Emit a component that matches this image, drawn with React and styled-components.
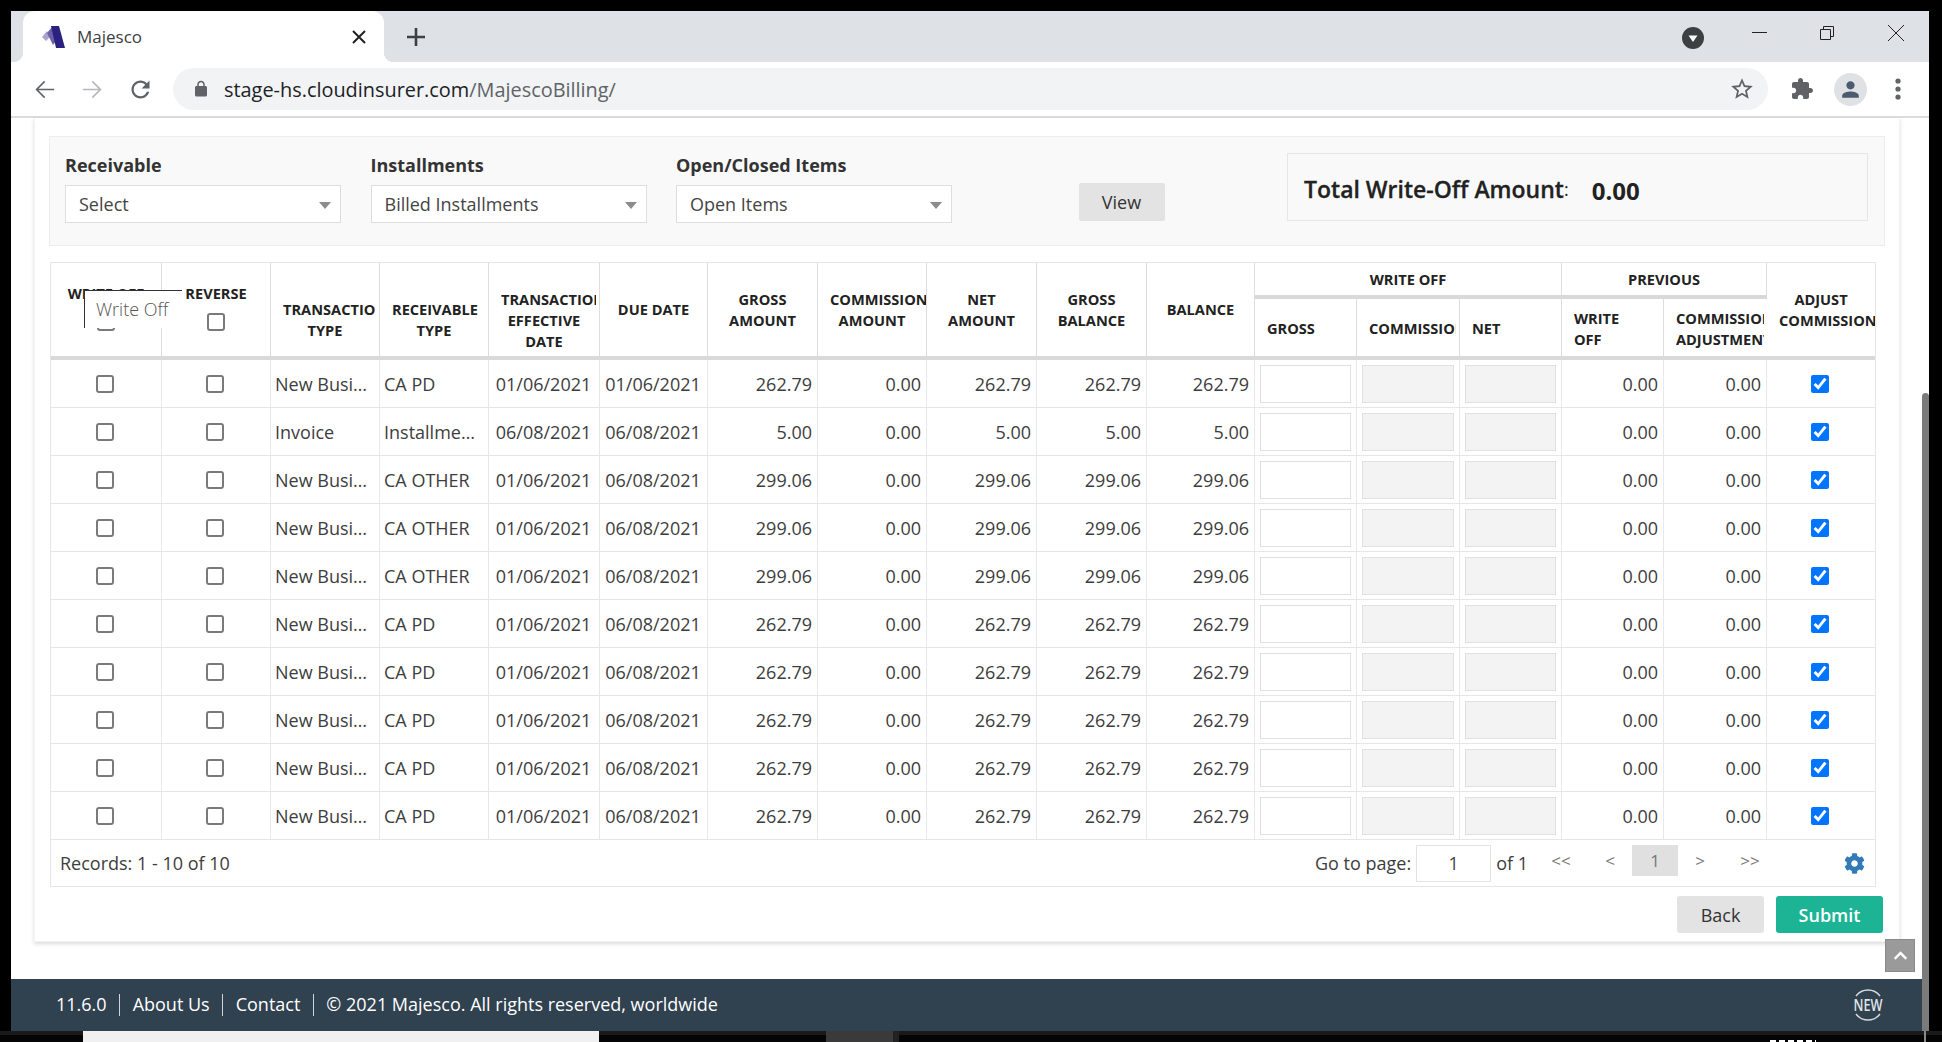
import React from "react";
import styled, { createGlobalStyle } from "styled-components";
import { FaCog, FaChevronUp } from "react-icons/fa";

const GlobalStyle = createGlobalStyle`
  html, body { margin: 0; padding: 0; background: #000; }
  body { font-family: "Open Sans", sans-serif; color: #333; overflow: hidden; }
  * { box-sizing: border-box; }
`;

const COLS = [111, 109, 109, 109, 111, 108, 110, 109, 110, 110, 108, 102, 103, 102, 102, 103, 108];

const ROWS = [
  ["New Business", "CA PD", "01/06/2021", "01/06/2021", "262.79"],
  ["Invoice", "Installment Fee", "06/08/2021", "06/08/2021", "5.00"],
  ["New Business", "CA OTHER", "01/06/2021", "06/08/2021", "299.06"],
  ["New Business", "CA OTHER", "01/06/2021", "06/08/2021", "299.06"],
  ["New Business", "CA OTHER", "01/06/2021", "06/08/2021", "299.06"],
  ["New Business", "CA PD", "01/06/2021", "06/08/2021", "262.79"],
  ["New Business", "CA PD", "01/06/2021", "06/08/2021", "262.79"],
  ["New Business", "CA PD", "01/06/2021", "06/08/2021", "262.79"],
  ["New Business", "CA PD", "01/06/2021", "06/08/2021", "262.79"],
  ["New Business", "CA PD", "01/06/2021", "06/08/2021", "262.79"],
];

const Screen = styled.div`
  width: 1942px;
  height: 1042px;
  padding: 11px 13px 0 11px;
  background: #000;
  display: flex;
  flex-direction: column;
`;

const Browser = styled.div`
  height: 1020px;
  display: flex;
  flex-direction: column;
  background: #fff;
`;

const TabStrip = styled.div`
  height: 51px;
  flex: none;
  display: flex;
  align-items: flex-start;
  padding-left: 12px;
  background: #dee1e6;
`;

const Tab = styled.div`
  position: relative;
  width: 361px;
  height: 51px;
  display: flex;
  align-items: center;
  padding: 0 17px 0 19px;
  background: #fff;
  border-radius: 12px 12px 0 0;
  font-size: 17px;
  color: #3c4043;

  &::before, &::after {
    content: "";
    position: absolute;
    bottom: 0;
    width: 10px;
    height: 10px;
  }
  &::before { left: -10px; background: radial-gradient(circle at 0 0, #dee1e6 10px, #fff 10.5px); }
  &::after { right: -10px; background: radial-gradient(circle at 100% 0, #dee1e6 10px, #fff 10.5px); }
`;

const TabTitle = styled.span`
  margin-left: 11px;
  flex: 1;
`;

const NewTab = styled.div`
  margin: 16px 0 0 22px;
  width: 20px;
  height: 20px;
  display: flex;
`;

const WindowButtons = styled.div`
  margin-left: auto;
  display: flex;
  align-items: center;
  height: 44px;
  padding-right: 24px;
`;

const ProfileDot = styled.div`
  width: 22px;
  height: 22px;
  margin: 10px 46px 0 0;
  border-radius: 50%;
  background: #3c4043;
  display: flex;
  align-items: center;
  justify-content: center;
`;

const WinIcon = styled.div`
  width: 18px;
  height: 18px;
  margin-left: ${(p) => p.$gap}px;
  display: flex;
`;

const Toolbar = styled.div`
  height: 56px;
  flex: none;
  display: flex;
  align-items: center;
  padding: 0 19px 0 19px;
  border-bottom: 2px solid #dadce0;
  background: #fff;
`;

const NavIcon = styled.div`
  width: 28px;
  height: 28px;
  margin-right: 20px;
  display: flex;
  align-items: center;
  justify-content: center;
  &:nth-of-type(3) { margin-right: 19px; }
`;

const Omnibox = styled.div`
  width: 1595px;
  height: 42px;
  flex: none;
  display: flex;
  align-items: center;
  padding: 0 13px 0 19px;
  border-radius: 21px;
  background: #f1f3f4;
  font-size: 19.9px;
  color: #202124;
`;

const LockIcon = styled.svg`
  flex: none;
  margin-right: 14px;
`;

const UrlPath = styled.span`
  color: #5f6368;
`;

const Star = styled.div`
  margin-left: auto;
  width: 26px;
  height: 26px;
  display: flex;
`;

const Extension = styled.div`
  width: 24px;
  height: 24px;
  margin-left: 22px;
  display: flex;
`;

const Avatar = styled.div`
  width: 33px;
  height: 33px;
  margin-left: 20px;
  border-radius: 50%;
  background: #dfe1e5;
  display: flex;
  align-items: center;
  justify-content: center;
`;

const MoreDots = styled.div`
  width: 24px;
  height: 24px;
  margin-left: 19px;
  display: flex;
`;

const Body = styled.div`
  flex: 1;
  min-height: 0;
  display: flex;
`;

const Main = styled.div`
  flex: 1;
  min-width: 0;
  display: flex;
  flex-direction: column;
`;

const ScrollTrack = styled.div`
  width: 7px;
  flex: none;
  padding-top: 275px;
  background: #fff;
`;

const ScrollThumb = styled.div`
  height: 100%;
  background: #7b7b7b;
  border-radius: 4px 4px 0 0;
`;

const Page = styled.div`
  position: relative;
  flex: 1;
  min-height: 0;
  padding: 0 22px 37px 23px;
`;

const Card = styled.div`
  height: 824px;
  padding: 18px 14px 0;
  background: #fff;
  border: 1px solid #f3f3f3;
  border-top: 0;
  box-shadow: 0 2px 4px rgba(0, 0, 0, 0.14);
`;

const FilterPanel = styled.div`
  height: 110px;
  display: flex;
  align-items: flex-start;
  padding: 0 16px 0 15px;
  background: #f9f9f9;
  border: 1px solid #ededed;
`;

const Field = styled.div`
  width: 276px;
  margin-right: 29.5px;
  padding-top: 17px;
`;

const FieldLabel = styled.div`
  height: 22px;
  margin-bottom: 9px;
  font-size: 18px;
  line-height: 22px;
  font-weight: 700;
  color: #333;
`;

const SelectBox = styled.div`
  height: 38px;
  display: flex;
  align-items: center;
  justify-content: space-between;
  padding: 0 9px 0 13px;
  background: #fff;
  border: 1px solid #dedede;
  font-size: 18px;
  color: #444;
`;

const Caret = styled.span`
  width: 0;
  height: 0;
  margin-top: 3px;
  border-left: 6px solid transparent;
  border-right: 6px solid transparent;
  border-top: 7px solid #8c8c8c;
`;

const ViewButton = styled.button`
  width: 86px;
  height: 38px;
  margin: 46px 0 0 97px;
  border: 0;
  border-radius: 2px;
  background: #e3e3e3;
  font: 18px "Open Sans", sans-serif;
  color: #333;
`;

const TotalBox = styled.div`
  width: 581px;
  height: 68px;
  margin: 16px 0 0 auto;
  display: flex;
  align-items: center;
  padding: 4px 0 0 16px;
  border: 1px solid #e6e6e6;
  font-size: 23px;
  font-weight: 600;
  color: #222;
  -webkit-text-stroke: 0.3px #222;
`;

const Colon = styled.span`
  font-size: 18px;
  font-weight: 400;
  -webkit-text-stroke: 0;
`;

const TotalValue = styled.span`
  margin: 3px 0 0 23px;
  font-size: 24px;
  font-weight: 700;
  -webkit-text-stroke: 0;
`;

const TableWrap = styled.div`
  position: relative;
  margin: 16px 0 0 1px;
  width: 1826px;
  border: 1px solid #e6e6e6;
`;

const Grid = styled.table`
  width: 1824px;
  table-layout: fixed;
  border-collapse: separate;
  border-spacing: 0;
`;

const Head = styled.th`
  padding: ${(p) => p.$top || 0}px 12px 0;
  overflow: hidden;
  font-size: 14.6px;
  line-height: 21px;
  font-weight: 700;
  color: #222;
  background: #fff;
  text-align: ${(p) => p.$align || "center"};
  vertical-align: ${(p) => p.$valign || "middle"};
  border-right: 1px solid #dcdcdc;
  border-bottom: 4px solid #d9d9d9;
  height: ${(p) => p.$h || 36}px;
  &:last-child { border-right: 0; }
`;

// long words stop a little before the cell edge
const Clipped = styled.span`
  display: block;
  clip-path: inset(0 -9px 0 0);
`;

const StackHead = styled(Head)`
  padding: 20px 0 0;
`;

const StackBox = styled.div`
  height: 50px;
  display: flex;
  flex-direction: column;
  align-items: center;
  gap: 9px;
`;

const Cell = styled.td`
  height: 48px;
  padding: 0 5px 0 4px;
  overflow: hidden;
  white-space: nowrap;
  text-overflow: ellipsis;
  font-size: 18px;
  color: #3d3d3d;
  text-align: ${(p) => p.$align || "left"};
  border-right: 1px solid #e8e8e8;
  border-bottom: 1px solid #e6e6e6;
  &:last-child { border-right: 0; }
`;

const CheckCell = styled(Cell)`
  padding: 0 8px 0 5px;
`;

const InputCell = styled(Cell)`
  padding: 0 5px;
`;

const Check = styled.input.attrs({ type: "checkbox" })`
  display: block;
  width: 18px;
  height: 18px;
  margin: 0 auto;
  &:not(:checked) {
    appearance: none;
    background: #fff;
    border: 2px solid #7a7a7a;
    border-radius: 3px;
  }
`;

const AmountInput = styled.input`
  display: block;
  width: 100%;
  height: 38px;
  border: 1px solid #e0e0e0;
  background: ${(p) => (p.disabled ? "#f3f3f3" : "#fff")};
`;

const Tip = styled.div`
  position: absolute;
  left: 33px;
  top: 27px;
  width: 98px;
  height: 38px;
  padding: 6px 0 0 11px;
  background: #fff;
  border-top: 1px solid #333;
  border-left: 1px solid #333;
  font-size: 18px;
  font-weight: 300;
  color: #555;
`;

const Pager = styled.div`
  height: 46px;
  display: flex;
  align-items: center;
  padding: 0 10px 0 9px;
  font-size: 18px;
  color: #3d3d3d;
`;

const GoTo = styled.span`
  margin-left: auto;
`;

const PageInput = styled.input`
  width: 75px;
  height: 37px;
  margin: 0 5px 0 5px;
  border: 1px solid #e3e3e3;
  font: 18px "Open Sans", sans-serif;
  color: #444;
  text-align: center;
`;

const PageLink = styled.div`
  width: ${(p) => (p.$active ? 46 : 44)}px;
  height: 31px;
  margin: -6px 0 0 ${(p) => p.$gap || 0}px;
  display: flex;
  align-items: center;
  justify-content: center;
  font-size: 17px;
  color: #777;
  background: ${(p) => (p.$active ? "#e0e0e0" : "transparent")};
`;

const Gear = styled(FaCog)`
  width: 21px;
  height: 21px;
  margin-left: 72px;
  color: #337ab7;
`;

const Actions = styled.div`
  display: flex;
  justify-content: flex-end;
  gap: 12px;
  margin: 9px 2px 0 0;
`;

const ActionButton = styled.button`
  height: 37px;
  width: ${(p) => (p.$primary ? 107 : 87)}px;
  border: 0;
  border-radius: 3px;
  background: ${(p) => (p.$primary ? "#1cb494" : "#e3e3e3")};
  color: ${(p) => (p.$primary ? "#fff" : "#333")};
  font: ${(p) => (p.$primary ? 600 : 400)} 18px "Open Sans", sans-serif;
`;

const ScrollUp = styled.div`
  position: absolute;
  right: 7px;
  bottom: 7px;
  width: 30px;
  height: 33px;
  display: flex;
  align-items: center;
  justify-content: center;
  background: #9a9a9a;
  border: 1px solid #8a8a8a;
  color: #fff;
`;

const Footer = styled.div`
  height: 52px;
  flex: none;
  display: flex;
  align-items: center;
  padding: 0 38px 0 45px;
  background: #304150;
  color: #fff;
  font-size: 18px;
`;

const FootItem = styled.span`
  height: 22px;
  line-height: 21px;
  padding: 0 12.5px;
  border-right: 1px solid #cfd5da;
  &:first-child { padding-left: 0; }
  &:last-of-type { border-right: 0; }
`;

const NewBadge = styled.svg`
  margin-left: auto;
  width: 32px;
  height: 36px;
`;

const BottomEdge = styled.div`
  flex: 1;
  display: flex;
  margin: 0 -13px 0 -11px;
  background: #050505;
  border-top: 4px solid #1a1a1a;
`;

const EdgeWindow = styled.div`
  width: 516px;
  margin: -4px 0 0 83px;
  background: #f0f0f0;
`;

const EdgeTab = styled.div`
  width: 73px;
  margin: -4px 0 0 227px;
  background: #3a3a3a;
  border-right: 6px solid #222;
`;

const EdgeLabel = styled.div`
  width: 46px;
  height: 2px;
  margin: 5px 0 0 871px;
  background: repeating-linear-gradient(90deg, #fff 0 6px, transparent 6px 9px);
`;

const EdgeLine = styled.div`
  width: 2px;
  margin: -4px 0 0 108px;
  background: #8a8a8a;
`;

const BackIcon = ({ color }) => (
  <svg viewBox="0 0 24 24" width="29" height="29" fill={color} style={{ flex: "none" }}><path d="M20 11.3H7l5.6-5.6L11.7 4.8 4.5 12l7.2 7.2.9-.9L7 12.7h13v-1.4z" /></svg>
);

const ForwardIcon = ({ color }) => (
  <svg viewBox="0 0 24 24" width="29" height="29" fill={color} style={{ flex: "none" }}><path d="M4 11.3h13l-5.6-5.6.9-.9 7.2 7.2-7.2 7.2-.9-.9 5.6-5.6H4v-1.4z" /></svg>
);

const HeaderCheck = ({ label }) => (
  <StackBox>
    <span>{label}</span>
    <Check readOnly />
  </StackBox>
);

export default function App() {
  return (
    <Screen>
      <GlobalStyle />
      <Browser>
        <TabStrip>
          <Tab>
            <svg viewBox="0 0 24 24" width="24" height="24">
              <path d="M0 12 L5 6 L8 12 L4 16 Z" fill="#a9a3cf" />
              <path d="M5 8 L10 2 L14 16 L11 20 Z" fill="#6a5fa8" />
              <path d="M9 1 L17 1 L23 23 L14 23 Z" fill="#2b2280" />
            </svg>
            <TabTitle>Majesco</TabTitle>
            <svg viewBox="0 0 16 16" width="16" height="16" stroke="#222" strokeWidth="2"><path d="M2 2 L14 14 M14 2 L2 14" /></svg>
          </Tab>
          <NewTab>
            <svg viewBox="0 0 20 20" width="20" height="20" stroke="#3c4043" strokeWidth="2.6"><path d="M10 1 V19 M1 10 H19" /></svg>
          </NewTab>
          <WindowButtons>
            <ProfileDot>
              <svg viewBox="0 0 12 12" width="12" height="12" fill="#fff"><path d="M1.5 3.5 H10.5 L6 10 Z" /></svg>
            </ProfileDot>
            <WinIcon $gap={0}>
              <svg viewBox="0 0 18 18" width="18" height="18" stroke="#222" fill="none"><path d="M2 8.5 H17" /></svg>
            </WinIcon>
            <WinIcon $gap={50}>
              <svg viewBox="0 0 18 18" width="18" height="18" stroke="#222" fill="none"><path d="M2.5 5.5 H12.5 V15.5 H2.5 Z M5.5 5.5 V2.5 H15.5 V12.5 H12.5" /></svg>
            </WinIcon>
            <WinIcon $gap={51}>
              <svg viewBox="0 0 18 18" width="18" height="18" stroke="#222" fill="none"><path d="M1 1 L17 17 M17 1 L1 17" /></svg>
            </WinIcon>
          </WindowButtons>
        </TabStrip>

        <Toolbar>
          <NavIcon><BackIcon color="#5f6368" /></NavIcon>
          <NavIcon><ForwardIcon color="#b4b7bb" /></NavIcon>
          <NavIcon>
            <svg viewBox="0 0 24 24" width="27" height="27" fill="#5f6368" style={{ flex: "none" }}><path d="M17.65 6.35C16.2 4.9 14.21 4 12 4c-4.42 0-7.99 3.58-7.99 8s3.57 8 7.99 8c3.73 0 6.84-2.55 7.73-6h-2.08c-.82 2.33-3.04 4-5.65 4-3.31 0-6-2.69-6-6s2.69-6 6-6c1.66 0 3.14.69 4.22 1.78L13 11h7V4l-2.35 2.35z" /></svg>
          </NavIcon>
          <Omnibox>
            <LockIcon viewBox="0 0 24 24" width="18" height="18" fill="#5f6368"><path d="M18 8h-1V6c0-2.76-2.24-5-5-5S7 3.24 7 6v2H6c-1.1 0-2 .9-2 2v10c0 1.1.9 2 2 2h12c1.1 0 2-.9 2-2V10c0-1.1-.9-2-2-2zM9 6c0-1.66 1.34-3 3-3s3 1.34 3 3v2H9V6z" /></LockIcon>
            <span>stage-hs.cloudinsurer.com<UrlPath>/MajescoBilling/</UrlPath></span>
            <Star>
              <svg viewBox="0 0 24 24" width="26" height="26" fill="#5f6368"><path d="M22 9.24l-7.19-.62L12 2 9.19 8.63 2 9.24l5.46 4.73L5.82 21 12 17.27 18.18 21l-1.63-7.03L22 9.24zM12 15.4l-3.76 2.27 1-4.28-3.32-2.88 4.38-.38L12 6.1l1.71 4.04 4.38.38-3.32 2.88 1 4.28L12 15.4z" /></svg>
            </Star>
          </Omnibox>
          <Extension>
            <svg viewBox="0 0 24 24" width="24" height="24" fill="#5f6368"><path d="M20.5 11H19V7c0-1.1-.9-2-2-2h-4V3.5C13 2.12 11.88 1 10.5 1S8 2.12 8 3.5V5H4c-1.1 0-1.99.9-1.99 2v3.8H3.5c1.49 0 2.7 1.21 2.7 2.7s-1.21 2.7-2.7 2.7H2V20c0 1.1.9 2 2 2h3.8v-1.5c0-1.49 1.21-2.7 2.7-2.7 1.49 0 2.7 1.21 2.7 2.7V22H17c1.1 0 2-.9 2-2v-4h1.5c1.38 0 2.5-1.12 2.5-2.5S21.88 11 20.5 11z" /></svg>
          </Extension>
          <Avatar>
            <svg viewBox="0 0 24 24" width="25" height="25" fill="#4b5a70"><path d="M12 12c2.2 0 4-1.8 4-4s-1.8-4-4-4-4 1.8-4 4 1.8 4 4 4zm0 2c-2.7 0-8 1.3-8 4v2h16v-2c0-2.7-5.3-4-8-4z" /></svg>
          </Avatar>
          <MoreDots>
            <svg viewBox="0 0 24 24" width="24" height="24" fill="#5f6368"><circle cx="12" cy="4" r="2.6" /><circle cx="12" cy="12" r="2.6" /><circle cx="12" cy="20" r="2.6" /></svg>
          </MoreDots>
        </Toolbar>

        <Body>
          <Main>
            <Page>
              <Card>
                <FilterPanel>
                  <Field>
                    <FieldLabel>Receivable</FieldLabel>
                    <SelectBox>Select<Caret /></SelectBox>
                  </Field>
                  <Field>
                    <FieldLabel>Installments</FieldLabel>
                    <SelectBox>Billed Installments<Caret /></SelectBox>
                  </Field>
                  <Field>
                    <FieldLabel>Open/Closed Items</FieldLabel>
                    <SelectBox>Open Items<Caret /></SelectBox>
                  </Field>
                  <ViewButton>View</ViewButton>
                  <TotalBox>
                    Total Write-Off Amount<Colon>:</Colon>
                    <TotalValue>0.00</TotalValue>
                  </TotalBox>
                </FilterPanel>

                <TableWrap>
                  <Grid>
                    <colgroup>
                      {COLS.map((w, i) => <col key={i} width={w} />)}
                    </colgroup>
                    <thead>
                      <tr>
                        <StackHead rowSpan={2} $valign="top"><HeaderCheck label="WRITE OFF" /></StackHead>
                        <StackHead rowSpan={2} $valign="top"><HeaderCheck label="REVERSE" /></StackHead>
                        <Head rowSpan={2} $top={21}><Clipped>TRANSACTION TYPE</Clipped></Head>
                        <Head rowSpan={2} $top={21}>RECEIVABLE TYPE</Head>
                        <Head rowSpan={2} $top={21}><Clipped>TRANSACTION EFFECTIVE DATE</Clipped></Head>
                        <Head rowSpan={2}>DUE DATE</Head>
                        <Head rowSpan={2}>GROSS AMOUNT</Head>
                        <Head rowSpan={2}>COMMISSION AMOUNT</Head>
                        <Head rowSpan={2}>NET AMOUNT</Head>
                        <Head rowSpan={2}>GROSS BALANCE</Head>
                        <Head rowSpan={2}>BALANCE</Head>
                        <Head colSpan={3}>WRITE OFF</Head>
                        <Head colSpan={2}>PREVIOUS</Head>
                        <Head rowSpan={2}>ADJUST COMMISSION</Head>
                      </tr>
                      <tr>
                        <Head $align="left" $h={61} $top={2}>GROSS</Head>
                        <Head $align="left" $h={61} $top={2}><Clipped>COMMISSION</Clipped></Head>
                        <Head $align="left" $h={61} $top={2}>NET</Head>
                        <Head $align="left" $h={61} $top={2}>WRITE<br />OFF</Head>
                        <Head $align="left" $h={61} $top={2}><Clipped>COMMISSION ADJUSTMENT</Clipped></Head>
                      </tr>
                    </thead>
                    <tbody>
                      {ROWS.map((row, i) => (
                        <tr key={i}>
                          <CheckCell><Check readOnly /></CheckCell>
                          <CheckCell><Check readOnly /></CheckCell>
                          <Cell>{row[0]}</Cell>
                          <Cell>{row[1]}</Cell>
                          <Cell $align="center">{row[2]}</Cell>
                          <Cell $align="center">{row[3]}</Cell>
                          <Cell $align="right">{row[4]}</Cell>
                          <Cell $align="right">0.00</Cell>
                          <Cell $align="right">{row[4]}</Cell>
                          <Cell $align="right">{row[4]}</Cell>
                          <Cell $align="right">{row[4]}</Cell>
                          <InputCell><AmountInput /></InputCell>
                          <InputCell><AmountInput disabled /></InputCell>
                          <InputCell><AmountInput disabled /></InputCell>
                          <Cell $align="right">0.00</Cell>
                          <Cell $align="right">0.00</Cell>
                          <CheckCell><Check defaultChecked /></CheckCell>
                        </tr>
                      ))}
                    </tbody>
                  </Grid>
                  <Pager>
                    <span>Records: 1 - 10 of 10</span>
                    <GoTo>Go to page:</GoTo>
                    <PageInput defaultValue="1" />
                    <span>of 1</span>
                    <PageLink $gap={11}>&lt;&lt;</PageLink>
                    <PageLink $gap={5}>&lt;</PageLink>
                    <PageLink $active>1</PageLink>
                    <PageLink>&gt;</PageLink>
                    <PageLink $gap={6}>&gt;&gt;</PageLink>
                    <Gear />
                  </Pager>
                  <Tip>Write Off</Tip>
                </TableWrap>

                <Actions>
                  <ActionButton>Back</ActionButton>
                  <ActionButton $primary>Submit</ActionButton>
                </Actions>
              </Card>
              <ScrollUp><FaChevronUp size={15} /></ScrollUp>
            </Page>
            <Footer>
              <FootItem>11.6.0</FootItem>
              <FootItem>About Us</FootItem>
              <FootItem>Contact</FootItem>
              <FootItem>© 2021 Majesco. All rights reserved, worldwide</FootItem>
              <NewBadge viewBox="0 0 32 36" fill="none" stroke="#d5d9dc" strokeWidth="1.4">
                <path d="M4 9 A15 15 0 0 1 28 9" />
                <path d="M4 27 A15 15 0 0 0 28 27" />
                <text x="16" y="24" textAnchor="middle" fontSize="16" fontWeight="600" fontFamily="Open Sans, sans-serif" fill="#dfe3e6" stroke="none" textLength="29" lengthAdjust="spacingAndGlyphs">NEW</text>
              </NewBadge>
            </Footer>
          </Main>
          <ScrollTrack><ScrollThumb /></ScrollTrack>
        </Body>
      </Browser>
      <BottomEdge>
        <EdgeWindow />
        <EdgeTab />
        <EdgeLabel />
        <EdgeLine />
      </BottomEdge>
    </Screen>
  );
}
